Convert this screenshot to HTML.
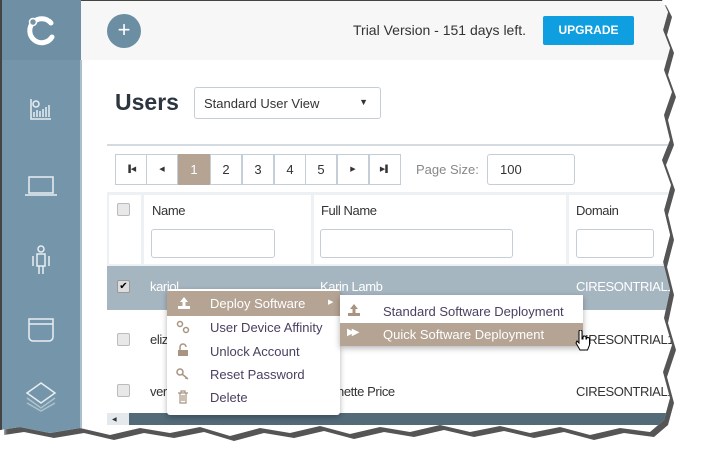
<!DOCTYPE html>
<html><head><meta charset="utf-8"><style>
*{margin:0;padding:0;box-sizing:border-box}
body{width:706px;height:463px;background:#fff;font-family:"Liberation Sans",sans-serif;position:relative;overflow:hidden}
.shadow{position:absolute;left:4px;top:5px;width:706px;height:463px;background:#555;filter:blur(2px);clip-path:polygon(0 0,662px 0,668px 12px,663px 30px,670px 48px,664px 70px,672px 92px,664px 115px,670px 140px,662px 160px,671px 185px,664px 210px,670px 235px,663px 262px,670px 290px,664px 318px,672px 345px,663px 372px,670px 398px,664px 420px,650px 432px,620px 428px,590px 435px,560px 427px,530px 433px,500px 426px,470px 432px,440px 425px,410px 432px,380px 427px,350px 434px,320px 426px,290px 433px,260px 428px,230px 436px,200px 427px,170px 433px,140px 428px,110px 435px,80px 428px,50px 433px,20px 427px,0 430px)}
.page{position:absolute;left:0;top:0;width:706px;height:463px;background:#fff;clip-path:polygon(0 0,662px 0,668px 12px,663px 30px,670px 48px,664px 70px,672px 92px,664px 115px,670px 140px,662px 160px,671px 185px,664px 210px,670px 235px,663px 262px,670px 290px,664px 318px,672px 345px,663px 372px,670px 398px,664px 420px,650px 432px,620px 428px,590px 435px,560px 427px,530px 433px,500px 426px,470px 432px,440px 425px,410px 432px,380px 427px,350px 434px,320px 426px,290px 433px,260px 428px,230px 436px,200px 427px,170px 433px,140px 428px,110px 435px,80px 428px,50px 433px,20px 427px,0 430px)}
.a{position:absolute}
.side{left:0;top:0;width:81px;height:463px;background:#7596aa;border-left:2px solid #444}
.hdr{left:81px;top:0;width:625px;height:60px;background:#f7f7f7;border-top:1px solid #444}
.btn{border:1px solid #c5ced6;background:#fff;border-radius:3px}
.pg{top:154px;width:32px;height:31px;border:1px solid #c5ced6;background:#fff;font-size:13px;color:#333;text-align:center;line-height:29px}
.txt{font-size:13px;color:#333;letter-spacing:-0.4px}
.mi{font-size:13px;color:#4a4060;left:210px}
.ic{fill:none;stroke:#e8eef2;stroke-width:1.5}
</style></head><body>
<div class="shadow"></div>
<div class="page">
<div class="a side"></div>
<div class="a" style="left:2px;top:0;width:79px;height:60px;background:#6f90a4"></div>
<svg class="a" style="left:24px;top:10px" width="36" height="40"><path d="M27 13 A12 12 0 1 0 28 27" stroke="#fff" stroke-width="5" fill="none" stroke-linecap="round"/><circle cx="9" cy="12" r="3.5" fill="#7596aa" stroke="#fff" stroke-width="1.5"/></svg>
<div class="a" style="left:80px;top:60px;width:2px;height:380px;background:#a9bfcc"></div>
<svg class="a" style="left:28px;top:96px" width="26" height="26"><path class="ic" d="M3 3v20h20M6 21v-5M9 21v-7M12 21v-6M15 21v-8M18 21v-10M21 21v-12"/><circle class="ic" cx="8" cy="8" r="3"/></svg>
<svg class="a" style="left:23px;top:174px" width="36" height="26"><path class="ic" d="M6 3h24v16H6zM2 21h32"/></svg>
<svg class="a" style="left:28px;top:244px" width="26" height="34"><circle class="ic" cx="13" cy="5" r="3"/><path class="ic" d="M9 10h8v12H9zM11 22v8M15 22v8M5 12v10M21 12v10"/></svg>
<svg class="a" style="left:26px;top:316px" width="30" height="28"><path class="ic" d="M3 3h24v18a4 4 0 0 1-4 4H7a4 4 0 0 1-4-4zM3 8h24"/></svg>
<svg class="a" style="left:24px;top:380px" width="34" height="32"><path class="ic" d="M17 3l14 10-14 10L3 13z"/><path class="ic" style="opacity:.5" d="M3 18l14 10 14-10M3 23l14 8 14-8"/></svg>
<div class="a hdr"></div>
<div class="a" style="left:107px;top:14px;width:34px;height:34px;border-radius:50%;background:#6b8ea3;color:#fff;font-size:22px;text-align:center;line-height:32px">+</div>
<div class="a" style="left:353px;top:22px;font-size:14px;color:#333">Trial Version - 151 days left.</div>
<div class="a" style="left:543px;top:16px;width:91px;height:29px;background:#0f9ee0;color:#fff;font-size:12px;font-weight:bold;text-align:center;line-height:29px;border-radius:2px">UPGRADE</div>
<div class="a" style="left:115px;top:89px;font-size:23px;font-weight:bold;color:#2d3640">Users</div>
<div class="a btn" style="left:194px;top:87px;width:187px;height:32px;font-size:13px;color:#333;padding:8px 0 0 9px">Standard User View<span style="position:absolute;right:12px;top:9px;font-size:9px">▼</span></div>
<div class="a" style="left:107px;top:144px;width:600px;height:2px;background:#d3dbe1"></div>
<div class="a pg" style="left:115px;font-size:7px">▐◀</div>
<div class="a pg" style="left:146px;font-size:7px">◀</div>
<div class="a pg" style="left:178px;background:#b5a393;color:#fff;border-color:#b5a393">1</div>
<div class="a pg" style="left:210px">2</div>
<div class="a pg" style="left:242px">3</div>
<div class="a pg" style="left:274px">4</div>
<div class="a pg" style="left:305px">5</div>
<div class="a pg" style="left:337px;font-size:7px">▶</div>
<div class="a pg" style="left:369px;font-size:7px">▶▌</div>
<div class="a" style="left:416px;top:162px;font-size:13px;color:#888">Page Size:</div>
<div class="a btn" style="left:487px;top:154px;width:88px;height:31px;font-size:13px;color:#333;padding:7px 0 0 12px">100</div>
<div class="a" style="left:107px;top:192px;width:600px;height:74px;background:#eef1f3"></div>
<div class="a" style="left:109px;top:195px;width:32px;height:69px;background:#fff"></div>
<div class="a" style="left:144px;top:195px;width:167px;height:69px;background:#fff"></div>
<div class="a" style="left:314px;top:195px;width:252px;height:69px;background:#fff"></div>
<div class="a" style="left:569px;top:195px;width:140px;height:69px;background:#fff"></div>
<div class="a" style="left:117px;top:203px;width:13px;height:13px;border:1px solid #bbb;border-radius:2px;background:#e8e8e8"></div>
<div class="a txt" style="left:152px;top:203px">Name</div>
<div class="a txt" style="left:321px;top:203px">Full Name</div>
<div class="a txt" style="left:576px;top:203px">Domain</div>
<div class="a btn" style="left:151px;top:229px;width:124px;height:29px"></div>
<div class="a btn" style="left:320px;top:229px;width:193px;height:29px"></div>
<div class="a btn" style="left:576px;top:229px;width:78px;height:29px"></div>
<div class="a" style="left:107px;top:266px;width:600px;height:44px;background:#a6b6c1"></div>
<div class="a" style="left:117px;top:280px;width:13px;height:13px;border:1px solid #999;border-radius:2px;background:#ddd;font-size:10px;line-height:11px;text-align:center">✔</div>
<div class="a txt" style="left:150px;top:279px;color:#fff">kariol</div>
<div class="a txt" style="left:320px;top:279px;color:#fff">Karin Lamb</div>
<div class="a txt" style="left:576px;top:279px;color:#fff">CIRESONTRIAL1</div>
<div class="a" style="left:117px;top:333px;width:13px;height:13px;border:1px solid #bbb;border-radius:2px;background:#e8e8e8"></div>
<div class="a txt" style="left:150px;top:332px">eliz</div>
<div class="a txt" style="left:576px;top:332px">CIRESONTRIAL1</div>
<div class="a" style="left:117px;top:384px;width:13px;height:13px;border:1px solid #bbb;border-radius:2px;background:#e8e8e8"></div>
<div class="a txt" style="left:150px;top:384px">ver</div>
<div class="a txt" style="left:337px;top:384px">nette Price</div>
<div class="a txt" style="left:576px;top:384px">CIRESONTRIAL1</div>
<div class="a" style="left:107px;top:413px;width:600px;height:12px;background:#536a79"></div>
<div class="a" style="left:107px;top:413px;width:22px;height:12px;background:#e4e9ed;font-size:6px;color:#333;padding:3px 0 0 5px">◀</div>
<div class="a" style="left:167px;top:289px;width:173px;height:126px;background:#fff;border-radius:3px;box-shadow:0 2px 6px rgba(0,0,0,.3)"></div>
<div class="a" style="left:167px;top:291px;width:173px;height:25px;background:#b5a393"></div>
<div class="a mi" style="top:296px;color:#fff">Deploy Software</div>
<div class="a" style="left:328px;top:298px;font-size:7px;color:#fff">▶</div>
<div class="a mi" style="top:320px">User Device Affinity</div>
<div class="a mi" style="top:344px">Unlock Account</div>
<div class="a mi" style="top:367px">Reset Password</div>
<div class="a mi" style="top:390px">Delete</div>
<svg class="a" style="left:177px;top:296px" width="14" height="14"><path d="M7 1l4 5H8.5v4h-3V6H3zM1 10v3h12v-3" fill="#fff"/></svg>
<svg class="a" style="left:176px;top:320px" width="14" height="14" fill="none" stroke="#a89480" stroke-width="1.5"><circle cx="4" cy="4" r="2.5"/><circle cx="10" cy="10" r="2.5"/></svg>
<svg class="a" style="left:176px;top:343px" width="14" height="14"><path d="M2 7h10v6H2z" fill="#a89480"/><path d="M4 7V4a3 3 0 0 1 6 0" fill="none" stroke="#a89480" stroke-width="1.5"/></svg>
<svg class="a" style="left:176px;top:367px" width="14" height="14" fill="none" stroke="#a89480" stroke-width="1.5"><circle cx="4" cy="5" r="3"/><path d="M6 7l6 5M10 10v2"/></svg>
<svg class="a" style="left:176px;top:390px" width="14" height="14" fill="none" stroke="#a89480" stroke-width="1.2"><path d="M2 3h10M4 3v10h6V3M6 5v6M8 5v6M5 3V1h4v2"/></svg>
<div class="a" style="left:340px;top:295px;width:243px;height:51px;background:#fff;box-shadow:0 2px 6px rgba(0,0,0,.3)"></div>
<div class="a" style="left:340px;top:323px;width:243px;height:23px;background:#b5a393"></div>
<svg class="a" style="left:347px;top:303px" width="14" height="14"><path d="M7 1l4 5H8.5v4h-3V6H3zM1 10v3h12v-3" fill="#a89480"/></svg>
<div class="a mi" style="left:383px;top:304px">Standard Software Deployment</div>
<div class="a" style="left:347px;top:327px;font-size:10px;color:#fff;letter-spacing:-3px">▶▶</div>
<div class="a mi" style="left:383px;top:327px;color:#fff">Quick Software Deployment</div>
<svg class="a" style="left:575px;top:330px" width="16" height="22"><path d="M4 1.5a1.5 1.5 0 0 1 3 0V9h1V7.5a1.5 1.5 0 0 1 3 0V9h.5a1.5 1.5 0 0 1 3 0v6l-2 5H5L1 13l1-2 2 2z" fill="#fff" stroke="#000" stroke-width="1"/></svg>
</div>
</body></html>
